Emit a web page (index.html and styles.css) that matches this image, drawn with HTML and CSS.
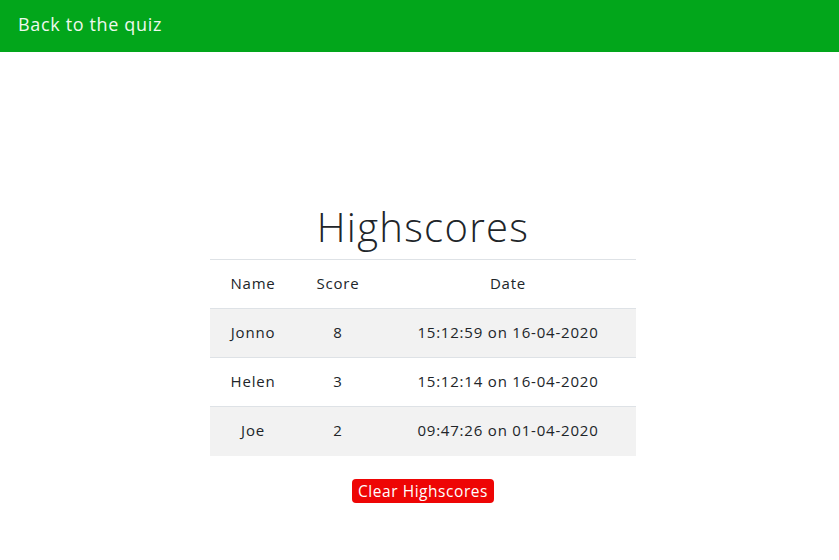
FILE: index.html
```html
<!DOCTYPE html>
<html>
<head>
<meta charset="utf-8">
<link rel="stylesheet" href="styles.css">
</head>
<body>
<header class="topbar">
  <a class="back" href="#">Back to the quiz</a>
</header>
<main class="page">
  <section class="scores">
    <h1 class="title">Highscores</h1>
    <table class="table">
      <colgroup>
        <col class="c-name"><col class="c-score"><col class="c-date">
      </colgroup>
      <thead>
        <tr><th>Name</th><th>Score</th><th>Date</th></tr>
      </thead>
      <tbody>
        <tr class="odd"><td>Jonno</td><td>8</td><td>15:12:59 on 16-04-2020</td></tr>
        <tr><td>Helen</td><td>3</td><td>15:12:14 on 16-04-2020</td></tr>
        <tr class="odd"><td>Joe</td><td>2</td><td>09:47:26 on 01-04-2020</td></tr>
      </tbody>
    </table>
    <button class="clear">Clear Highscores</button>
  </section>
</main>
</body>
</html>
```
FILE: styles.css
```css
* { box-sizing: border-box; }
html, body { margin: 0; padding: 0; background: #fff; }
body {
  font-family: "Open Sans", "DejaVu Sans", sans-serif;
  color: #212529;
}
.topbar {
  background: #02a61b;
  height: 52px;
  display: flex;
  align-items: center;
  padding-left: 18px;
  padding-bottom: 5px;
}
.back {
  color: #eef8ee;
  text-decoration: none;
  font-size: 18px;
  letter-spacing: 0.65px;
}
.page {
  padding-left: 7px;
  padding-top: 147px;
  display: flex;
  justify-content: center;
}
.scores {
  width: 426px;
  display: flex;
  flex-direction: column;
  align-items: center;
}
.title {
  margin: 0;
  font-weight: 300;
  font-size: 40px;
  line-height: 56px;
  letter-spacing: 1.3px;
  color: #212529;
}
.table {
  width: 426px;
  border-collapse: collapse;
  margin-top: 4px;
  font-size: 15px;
  table-layout: fixed;
}
.c-name { width: 86px; }
.c-score { width: 84px; }
.c-date { width: 256px; }
.table th, .table td {
  text-align: center;
  height: 49px;
  padding: 0 2px 2px;
  border-top: 1px solid #dee2e6;
  font-weight: 400;
  letter-spacing: 0.8px;
}
.table tr.odd td { background: #f2f2f2; }
.clear {
  margin-top: 23px;
  background: #ee0505;
  color: #fff;
  border: none;
  border-radius: 4px;
  font-family: inherit;
  font-size: 15.5px;
  padding: 0 2px;
  height: 24px;
  width: 142px;
  letter-spacing: 0.55px;
}
```
